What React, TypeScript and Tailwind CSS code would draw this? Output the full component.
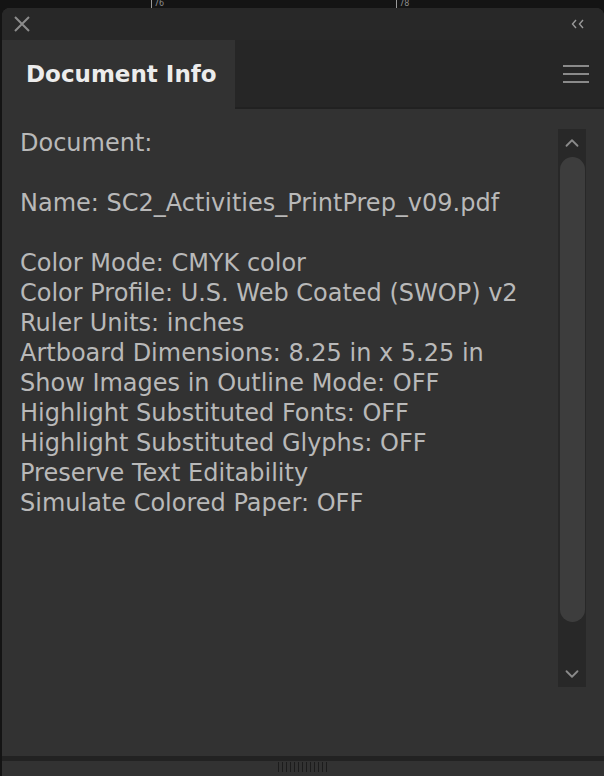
import { ChevronUp, ChevronDown } from "lucide-react";

const lines: string[] = [
  "Document:",
  "",
  "Name: SC2_Activities_PrintPrep_v09.pdf",
  "",
  "Color Mode: CMYK color",
  "Color Profile: U.S. Web Coated (SWOP) v2",
  "Ruler Units: inches",
  "Artboard Dimensions: 8.25 in x 5.25 in",
  "Show Images in Outline Mode: OFF",
  "Highlight Substituted Fonts: OFF",
  "Highlight Substituted Glyphs: OFF",
  "Preserve Text Editability",
  "Simulate Colored Paper: OFF",
];

const font = { fontFamily: '"DejaVu Sans", "Liberation Sans", sans-serif' };

export default function App() {
  return (
    <div
      className="flex h-[776px] w-[604px] flex-col overflow-hidden bg-[#141414]"
      style={font}
    >
      {/* ruler glimpse behind the panel */}
      <div className="flex h-[8px] shrink-0 items-start text-[8px] leading-[8px] text-[#8a8a8a]">
        <span className="ml-[151px] h-[8px] border-l border-[#9a9a9a] pl-[2px]">76</span>
        <span className="ml-[232px] h-[8px] border-l border-[#9a9a9a] pl-[2px]">78</span>
      </div>

      <div className="ml-[2px] flex flex-1 flex-col overflow-hidden rounded-t-[8px] bg-[#323232]">
        {/* header */}
        <div className="flex h-[32px] shrink-0 items-center justify-between bg-[#282828] pl-[11px] pr-[19px]">
          <svg width="18" height="18" viewBox="0 0 18 18">
            <path d="M2 2 L16 16 M16 2 L2 16" stroke="#8c8c8c" strokeWidth="2" />
          </svg>
          <svg width="14" height="10" viewBox="0 0 14 10">
            <path d="M5 1 L1.5 5 L5 9 M12 1 L8.5 5 L12 9" stroke="#9a9a9a" strokeWidth="1.4" fill="none" />
          </svg>
        </div>

        {/* tab row */}
        <div className="flex h-[69px] shrink-0">
          <div className="flex w-[233px] items-center bg-[#323232] pl-[24px]">
            <span className="text-[23px] font-bold text-[#ececec]">Document Info</span>
          </div>
          <div className="flex flex-1 items-center justify-end border-b-2 border-[#212121] bg-[#262626] pr-[15px]">
            <div className="flex w-[26px] flex-col gap-[6px]">
              <div className="h-[2px] bg-[#8a8a8a]" />
              <div className="h-[2px] bg-[#8a8a8a]" />
              <div className="h-[2px] bg-[#8a8a8a]" />
            </div>
          </div>
        </div>

        {/* content */}
        <div className="flex flex-1 bg-[#323232]">
          <div className="flex-1 pl-[18px] pt-[19px] text-[24px] leading-[30px] text-[#b9b9b9]">
            {lines.map((line, i) => (
              <div key={i} className="h-[30px] whitespace-nowrap">
                {line}
              </div>
            ))}
          </div>
          <div className="mr-[18px] mt-[20px] flex h-[558px] w-[28px] flex-col items-center bg-[#282828]">
            <ChevronUp size={22} strokeWidth={2} className="mt-[3px] text-[#8a8a8a]" />
            <div className="mt-[3px] h-[465px] w-[25px] rounded-full bg-[#3d3d3d]" />
            <ChevronDown size={22} strokeWidth={2} className="mt-[41px] text-[#8a8a8a]" />
          </div>
        </div>

        {/* bottom */}
        <div className="h-[5px] shrink-0 bg-[#222222]" />
        <div className="flex h-[15px] shrink-0 justify-center bg-[#323232] pr-[2px]">
          <div className="mt-[1px] flex h-[10px] gap-[3px]">
            {Array.from({ length: 13 }).map((_, i) => (
              <div key={i} className="w-[1px] bg-[#1c1c1c]" />
            ))}
          </div>
        </div>
      </div>
    </div>
  );
}
